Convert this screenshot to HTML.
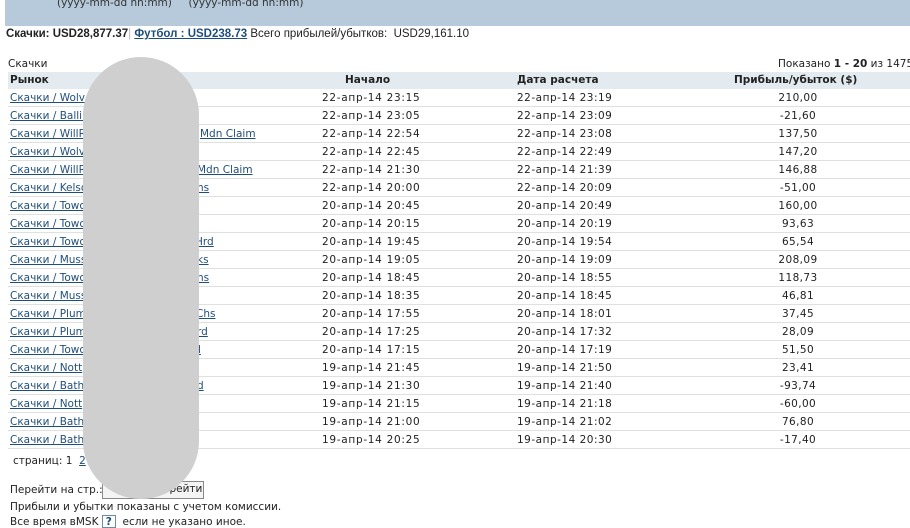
<!DOCTYPE html>
<html><head><meta charset="utf-8"><style>
*{margin:0;padding:0;box-sizing:border-box}
body{width:910px;height:527px;overflow:hidden;background:#fff;font-family:Tahoma,"DejaVu Sans","Liberation Sans",sans-serif;font-size:10.5px;color:#222;position:relative}
.a{position:absolute;white-space:nowrap}
a{color:#1e4e7c;text-decoration:underline}
.ban{position:absolute;left:5px;top:0;width:905px;height:26px;background:#b6cadb}
.hd{position:absolute;left:8px;top:72px;width:902px;height:17px;background:#e3ebf0;font-weight:bold}
.r{position:absolute;left:8px;width:902px;height:18px;border-bottom:1px solid #e0e0e0}
.r span{position:absolute;top:3px;white-space:nowrap}
.c1{left:2px}.c2{left:314px;letter-spacing:0.7px}.c3{left:509px;letter-spacing:0.5px}.c4{left:745px;width:90px;text-align:center;letter-spacing:0.4px}
.blob{position:absolute;left:83px;top:57px;width:116px;height:442px;background:#cfcfcf;border-radius:58px}
</style></head><body>
<div class="ban"></div>
<div class="a" style="left:57px;top:-3px;color:#333">(yyyy-mm-dd hh:mm)&nbsp;&nbsp;&nbsp;&nbsp; (yyyy-mm-dd hh:mm)</div>
<div class="a" style="left:6px;top:28px;font-family:'Liberation Sans',sans-serif;font-size:11.5px"><b>Скачки: USD28,877.37</b><span style="color:#bbb">|</span> <a href="#"><b>Футбол : USD238.73</b></a> Всего прибылей/убытков:&nbsp; USD29,161.10</div>
<div class="a" style="left:8px;top:58px">Скачки</div>
<div class="a" style="left:778px;top:58px">Показано <b>1 - 20</b> из 1475 р</div>
<div class="hd"><span class="a" style="left:2px;top:2px">Рынок</span><span class="a" style="left:337px;top:2px">Начало</span><span class="a" style="left:509px;top:2px">Дата расчета</span><span class="a" style="left:726px;top:2px">Прибыль/убыток ($)</span></div>

<div class="r" style="top:89px"><span class="c1"><a href="#">Скачки / Wolv</a></span><span class="c2">22-апр-14 23:15</span><span class="c3">22-апр-14 23:19</span><span class="c4">210,00</span></div>
<div class="r" style="top:107px"><span class="c1"><a href="#">Скачки / Ballin</a></span><span class="c2">22-апр-14 23:05</span><span class="c3">22-апр-14 23:09</span><span class="c4">-21,60</span></div>
<div class="r" style="top:125px"><span class="c1"><a href="#">Скачки / WillRI</a></span><span style="left:192px"><a href="#">Mdn Claim</a></span><span class="c2">22-апр-14 22:54</span><span class="c3">22-апр-14 23:08</span><span class="c4">137,50</span></div>
<div class="r" style="top:143px"><span class="c1"><a href="#">Скачки / Wolv</a></span><span class="c2">22-апр-14 22:45</span><span class="c3">22-апр-14 22:49</span><span class="c4">147,20</span></div>
<div class="r" style="top:161px"><span class="c1"><a href="#">Скачки / WillRI</a></span><span style="left:189px"><a href="#">Mdn Claim</a></span><span class="c2">22-апр-14 21:30</span><span class="c3">22-апр-14 21:39</span><span class="c4">146,88</span></div>
<div class="r" style="top:179px"><span class="c1"><a href="#">Скачки / Kelso</a></span><span style="left:189px"><a href="#">ns</a></span><span class="c2">22-апр-14 20:00</span><span class="c3">22-апр-14 20:09</span><span class="c4">-51,00</span></div>
<div class="r" style="top:197px"><span class="c1"><a href="#">Скачки / Towc</a></span><span class="c2">20-апр-14 20:45</span><span class="c3">20-апр-14 20:49</span><span class="c4">160,00</span></div>
<div class="r" style="top:215px"><span class="c1"><a href="#">Скачки / Towc</a></span><span class="c2">20-апр-14 20:15</span><span class="c3">20-апр-14 20:19</span><span class="c4">93,63</span></div>
<div class="r" style="top:233px"><span class="c1"><a href="#">Скачки / Towc</a></span><span style="left:187px"><a href="#">Hrd</a></span><span class="c2">20-апр-14 19:45</span><span class="c3">20-апр-14 19:54</span><span class="c4">65,54</span></div>
<div class="r" style="top:251px"><span class="c1"><a href="#">Скачки / Muss</a></span><span style="left:189px"><a href="#">ks</a></span><span class="c2">20-апр-14 19:05</span><span class="c3">20-апр-14 19:09</span><span class="c4">208,09</span></div>
<div class="r" style="top:269px"><span class="c1"><a href="#">Скачки / Towc</a></span><span style="left:189px"><a href="#">ns</a></span><span class="c2">20-апр-14 18:45</span><span class="c3">20-апр-14 18:55</span><span class="c4">118,73</span></div>
<div class="r" style="top:287px"><span class="c1"><a href="#">Скачки / Muss</a></span><span class="c2">20-апр-14 18:35</span><span class="c3">20-апр-14 18:45</span><span class="c4">46,81</span></div>
<div class="r" style="top:305px"><span class="c1"><a href="#">Скачки / Plump</a></span><span style="left:188px"><a href="#">Chs</a></span><span class="c2">20-апр-14 17:55</span><span class="c3">20-апр-14 18:01</span><span class="c4">37,45</span></div>
<div class="r" style="top:323px"><span class="c1"><a href="#">Скачки / Plump</a></span><span style="left:189px"><a href="#">rd</a></span><span class="c2">20-апр-14 17:25</span><span class="c3">20-апр-14 17:32</span><span class="c4">28,09</span></div>
<div class="r" style="top:341px"><span class="c1"><a href="#">Скачки / Towc</a></span><span style="left:190px"><a href="#">l</a></span><span class="c2">20-апр-14 17:15</span><span class="c3">20-апр-14 17:19</span><span class="c4">51,50</span></div>
<div class="r" style="top:359px"><span class="c1"><a href="#">Скачки / Nott</a></span><span class="c2">19-апр-14 21:45</span><span class="c3">19-апр-14 21:50</span><span class="c4">23,41</span></div>
<div class="r" style="top:377px"><span class="c1"><a href="#">Скачки / Bath</a></span><span style="left:189px"><a href="#">d</a></span><span class="c2">19-апр-14 21:30</span><span class="c3">19-апр-14 21:40</span><span class="c4">-93,74</span></div>
<div class="r" style="top:395px"><span class="c1"><a href="#">Скачки / Nott</a></span><span class="c2">19-апр-14 21:15</span><span class="c3">19-апр-14 21:18</span><span class="c4">-60,00</span></div>
<div class="r" style="top:413px"><span class="c1"><a href="#">Скачки / Bath</a></span><span class="c2">19-апр-14 21:00</span><span class="c3">19-апр-14 21:02</span><span class="c4">76,80</span></div>
<div class="r" style="top:431px"><span class="c1"><a href="#">Скачки / Bath</a></span><span class="c2">19-апр-14 20:25</span><span class="c3">19-апр-14 20:30</span><span class="c4">-17,40</span></div>

<div class="a" style="left:13px;top:455px">страниц: 1&nbsp; <a href="#">2</a></div>
<div class="a" style="left:10px;top:484px">Перейти на стр.:</div>
<div class="a" style="left:102px;top:481px;width:102px;height:18px;border:1px solid #888;background:#f4f4f4"><span class="a" style="left:60px;top:1px">ерейти</span></div>
<div class="a" style="left:10px;top:501px">Прибыли и убытки показаны с учетом комиссии.</div>
<div class="a" style="left:10px;top:515px">Все время вMSK <span style="display:inline-block;border:1px solid #6a8caa;width:14px;height:13px;text-align:center;font-weight:bold;color:#1e4e7c;line-height:12px">?</span>&nbsp; если не указано иное.</div>
<div class="blob"></div>
</body></html>
